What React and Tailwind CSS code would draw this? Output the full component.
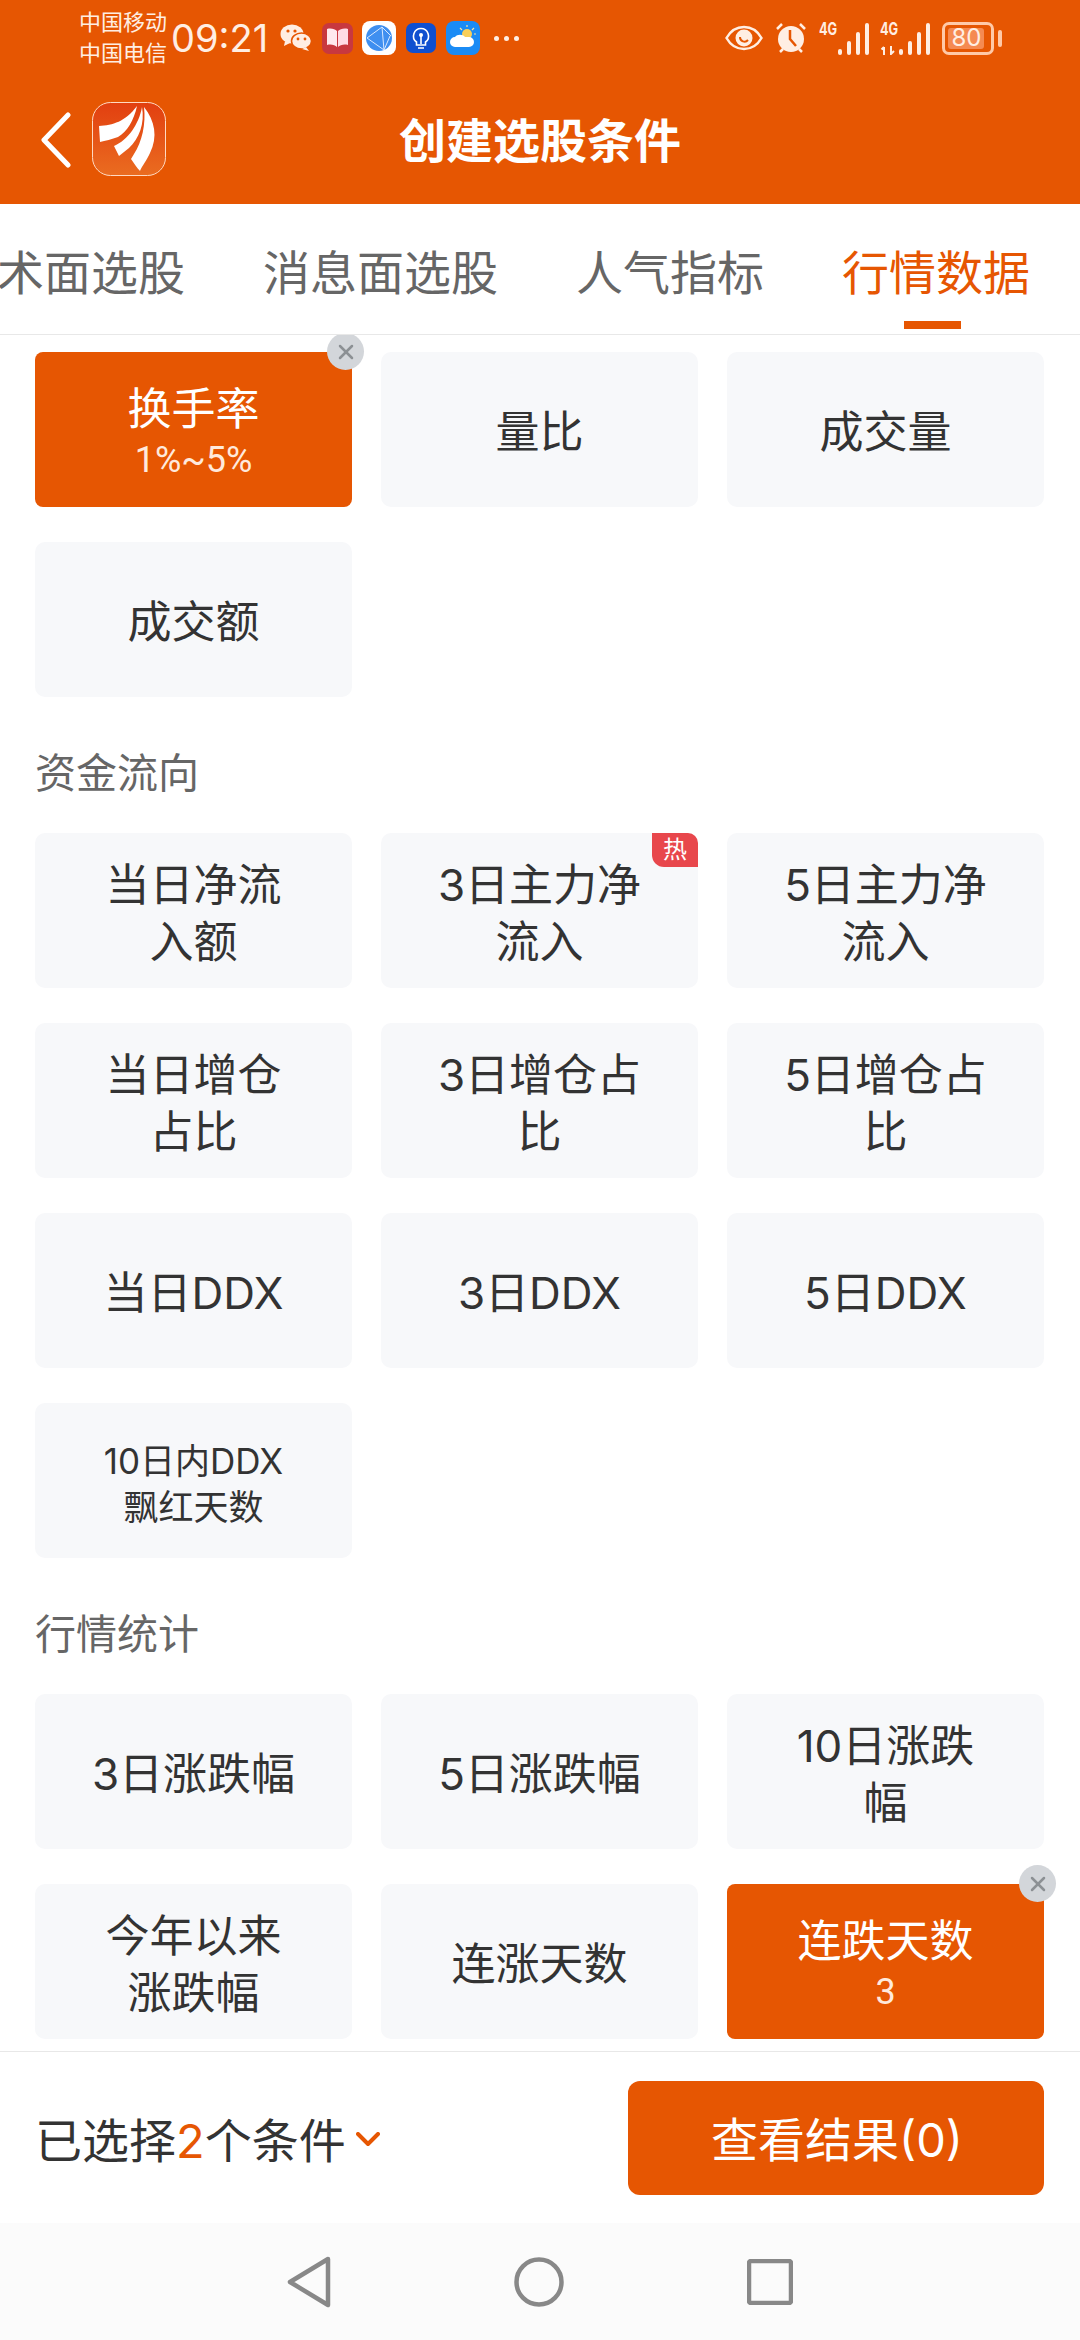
import { X } from "lucide-react";

const ORANGE = "#e65602";

function StatusBar() {
  return (
    <div className="h-[76px] flex items-center pl-[79px] pr-[78px] text-[#ffeee3]">
      <div className="flex flex-col text-[22px] leading-[31px] w-[92px]">
        <span>中国移动</span>
        <span>中国电信</span>
      </div>
      <span className="text-[38px] leading-none w-[100px] font-normal">09:21</span>
      <div className="flex items-center ml-[9px]">
        <svg width="32" height="28" viewBox="0 0 32 28">
          <ellipse cx="12" cy="10" rx="11.5" ry="9.5" fill="#ffeee3" />
          <path d="M5 17l-1 5 6-3z" fill="#ffeee3" />
          <ellipse cx="21.5" cy="17" rx="10" ry="8" fill="#ffeee3" stroke={ORANGE} strokeWidth="1.5" />
          <path d="M26 23l3 4-7-2z" fill="#ffeee3" />
          <circle cx="8" cy="7" r="1.6" fill={ORANGE} />
          <circle cx="15" cy="7" r="1.6" fill={ORANGE} />
          <circle cx="18" cy="15" r="1.4" fill={ORANGE} />
          <circle cx="25" cy="15" r="1.4" fill={ORANGE} />
        </svg>
        <svg className="ml-[10px]" width="31" height="31" viewBox="0 0 31 31">
          <rect width="31" height="31" rx="7" fill="#c8383f" />
          <path d="M5 6c4-1 8 0 10 2v16c-2-2-6-3-10-2z" fill="#ffe9ee" />
          <path d="M26 6c-4-1-8 0-10 2v16c2-2 6-3 10-2z" fill="#ffdbe4" />
        </svg>
        <svg className="ml-[9px]" width="34" height="34" viewBox="0 0 34 34">
          <rect width="34" height="34" rx="8" fill="#fff" />
          <circle cx="17" cy="17" r="13" fill="#3f8ff0" />
          <path d="M5 17l15-11M5 17l17 12M20 6l2 23M20 6l9 9M22 29l6-14" stroke="#d8e9ff" strokeWidth="1" fill="none" />
        </svg>
        <svg className="ml-[10px]" width="30" height="30" viewBox="0 0 30 30">
          <rect width="30" height="30" rx="7" fill="#0f4fd0" />
          <path d="M15 5.500a7.500 7.500 0 0 0-4.500 13.500V22h9v-3a7.500 7.500 0 0 0-4.500-13.500z" fill="none" stroke="#fff" strokeWidth="1.600" />
          <path d="M12 25h6M15 13v8" stroke="#fff" strokeWidth="1.600" />
          <circle cx="15" cy="12" r="2" fill="#fff" />
        </svg>
        <svg className="ml-[10px]" width="34" height="34" viewBox="0 0 34 34">
          <rect width="34" height="34" rx="8" fill="#1a8bf5" />
          <circle cx="21" cy="13" r="5" fill="#f9cf5a" />
          <path d="M21 4v2M28 7l-2 2M30 13h-2M14 7l2 2" stroke="#f9e3a0" strokeWidth="1.200" />
          <path d="M9 26a5 5 0 0 1 0-10c2-3 8-3 10 0h4a5 5 0 0 1 0 10z" fill="#fff" />
        </svg>
        <div className="ml-[14px] flex gap-[5px]">
          <span className="w-[5px] h-[5px] rounded-full bg-[#ffeee3]" />
          <span className="w-[5px] h-[5px] rounded-full bg-[#ffeee3]" />
          <span className="w-[5px] h-[5px] rounded-full bg-[#ffeee3]" />
        </div>
      </div>
      <div className="ml-auto flex items-center">
        <svg width="38" height="26" viewBox="0 0 38 26">
          <path d="M1.500 13C6 5 12 2 19 2s13 3 17.500 11C32 21 26 24 19 24S6 21 1.500 13z" fill="none" stroke="#ffeee3" strokeWidth="2.500" />
          <circle cx="19" cy="13" r="8.500" fill="#ffeee3" />
          <path d="M15 12a4.500 4.500 0 0 0 8 3" fill="none" stroke={ORANGE} strokeWidth="2" />
        </svg>
        <svg className="ml-[12px]" width="32" height="32" viewBox="0 0 32 32">
          <circle cx="16" cy="17" r="13" fill="#ffeee3" />
          <path d="M15 8v9l6 7" fill="none" stroke={ORANGE} strokeWidth="2.500" />
          <path d="M2 7l5-5M30 7l-5-5M5 30l3-3M27 30l-3-3" stroke="#ffeee3" strokeWidth="2.500" />
        </svg>
        <Signal up={false} className="ml-[12px]" />
        <Signal up className="ml-[11px]" />
        <div className="ml-[12px] w-[52px] h-[33px] rounded-[7px] border-[3px] border-[#ffc9a8] p-[3px] relative flex items-center">
          <div className="h-full w-[36px] rounded-[3px] bg-[#f58a52]" />
          <span className="absolute inset-0 flex items-center justify-center text-[24px] leading-none text-[#ffeee3] -ml-[3px]">80</span>
        </div>
        <div className="ml-[4px] w-[4px] h-[17px] rounded-full bg-[#ffc9a8]" />
      </div>
    </div>
  );
}

function Signal({ up, className }) {
  return (
    <div className={`relative w-[50px] h-[33px] ${className}`}>
      <span className="absolute left-0 top-0 text-[17px] leading-[15px] font-bold scale-x-75 origin-left">4G</span>
      {up && (
        <svg className="absolute left-0 bottom-0" width="16" height="9" viewBox="0 0 16 9">
          <path d="M4 9V1M1.500 3.500L4 1M11 0v8l3-3" stroke="#ffeee3" strokeWidth="2" fill="none" />
        </svg>
      )}
      <div className="absolute right-0 bottom-0 flex items-end gap-[5px]">
        <span className="w-[4px] h-[6px] rounded-full bg-[#ffeee3]" />
        <span className="w-[4px] h-[14px] rounded-full bg-[#ffeee3]" />
        <span className="w-[4px] h-[23px] rounded-full bg-[#ffeee3]" />
        <span className="w-[4px] h-[32px] rounded-full bg-[#ffeee3]" />
      </div>
    </div>
  );
}

function Logo() {
  return (
    <svg width="74" height="74" viewBox="0 0 74 74">
      <defs>
        <linearGradient id="logoBg" x1="0" y1="0" x2="0" y2="1">
          <stop offset="0" stopColor="#e23f10" />
          <stop offset="1" stopColor="#ea6c20" />
        </linearGradient>
      </defs>
      <rect x="0.500" y="0.500" width="73" height="73" rx="18" fill="url(#logoBg)" stroke="#ffd9c2" />
      <path d="M7 24c14-1 26-4 38-20-3 14-10 26-19 31-6 2-13 4-18 5z" fill="#fff" />
      <path d="M22 44c14-6 25-22 28-39 3 16-3 32-13 41l-10 8z" fill="#fff" />
      <path d="M42 52c8-12 12-30 10-47 11 14 14 30 6 46-3 7-8 13-10 18-3-3-6-8-9-12z" fill="#fff" />
    </svg>
  );
}

function Header() {
  return (
    <div className="bg-[#e65602] shrink-0 h-[204px] flex flex-col">
      <StatusBar />
      <div className="relative flex-1 flex items-center justify-center">
        <div className="absolute left-[40px] top-0 h-full flex items-center">
          <svg width="32" height="56" viewBox="0 0 32 56">
            <path d="M28 3L4 28l24 25" fill="none" stroke="#fff" strokeWidth="5" strokeLinecap="round" strokeLinejoin="round" />
          </svg>
          <div className="ml-[20px] -mt-[2px] flex">
            <Logo />
          </div>
        </div>
        <span className="text-white text-[47px] font-bold leading-none">创建选股条件</span>
      </div>
    </div>
  );
}

function Tabs() {
  return (
    <div className="shrink-0 h-[131px] border-b border-[#e8e8e8] bg-white overflow-hidden">
      <div className="flex gap-[78px] -ml-[50px] pt-[44px] text-[47px] leading-[50px] text-[#666] whitespace-nowrap">
        <span>技术面选股</span>
        <span>消息面选股</span>
        <span>人气指标</span>
        <span className="relative text-[#e65602]">
          行情数据
          <span className="absolute left-[62px] top-[73px] w-[57px] h-[8px] bg-[#e65602]" />
        </span>
      </div>
    </div>
  );
}

function Card({ lines, value, selected, hot, small }) {
  if (selected) {
    return (
      <div className="relative h-[155px] rounded-[8px] bg-[#e65602] flex flex-col items-center justify-center pt-[5px] text-white">
        <span className="text-[44px] leading-[55px]">{lines[0]}</span>
        <span className="text-[36px] leading-[46px] text-[#ffe9dc] font-['Roboto',sans-serif]">{value}</span>
        <span className="absolute -top-[19px] -right-[12px] w-[37px] h-[37px] rounded-full bg-[#d3d6da] flex items-center justify-center">
          <X size={24} color="#8c9094" strokeWidth={2.500} />
        </span>
      </div>
    );
  }
  return (
    <div className="relative h-[155px] rounded-[10px] bg-[#f7f8fa] flex flex-col items-center justify-center pt-[6px] text-[#333]">
      {lines.map((line) => (
        <span key={line} className={small ? "text-[35px] leading-[46px]" : "text-[44px] leading-[57px]"}>
          {line}
        </span>
      ))}
      {hot && (
        <span className="absolute top-0 right-0 w-[46px] h-[34px] rounded-tr-[10px] rounded-bl-[12px] bg-[#e8474c] text-white text-[24px] leading-[34px] text-center">
          热
        </span>
      )}
    </div>
  );
}

function Grid({ children }) {
  return <div className="grid grid-cols-3 gap-x-[29px] gap-y-[35px]">{children}</div>;
}

function SectionTitle({ children }) {
  return (
    <div className="h-[136px] flex items-center pt-[16px] text-[41px] leading-none text-[#666]">{children}</div>
  );
}

function Footer() {
  return (
    <div className="shrink-0 h-[172px] border-t border-[#e8e8e8] bg-white flex items-center justify-between pl-[35px] pr-[36px]">
      <div className="flex items-center pt-[6px] text-[47px] leading-none text-[#333]">
        <span>已选择</span>
        <span className="text-[#e65602]">2</span>
        <span>个条件</span>
        <svg className="ml-[10px] -mt-[2px]" width="24" height="15" viewBox="0 0 24 15">
          <path d="M2 2l10 10L22 2" fill="none" stroke="#e65602" strokeWidth="4" strokeLinecap="round" strokeLinejoin="round" />
        </svg>
      </div>
      <button className="w-[416px] h-[114px] rounded-[12px] bg-[#e65602] text-white text-[47px] leading-none pt-[4px] pl-[2px]">
        查看结果(0)
      </button>
    </div>
  );
}

function NavBar() {
  return (
    <div className="shrink-0 h-[117px] bg-[#fbfbfb] flex items-center justify-center gap-[183px]">
      <svg width="44" height="52" viewBox="0 0 44 52">
        <path d="M41 3L3 26l38 23z" fill="none" stroke="#888" strokeWidth="4.500" strokeLinejoin="round" />
      </svg>
      <svg width="50" height="50" viewBox="0 0 50 50">
        <circle cx="25" cy="25" r="22.500" fill="none" stroke="#888" strokeWidth="4.500" />
      </svg>
      <svg width="46" height="46" viewBox="0 0 46 46">
        <rect x="2" y="2" width="42" height="42" rx="2" fill="none" stroke="#888" strokeWidth="4.500" />
      </svg>
    </div>
  );
}

export default function App() {
  return (
    <div className="w-[1080px] h-[2340px] bg-white flex flex-col overflow-hidden font-['Inter','Noto_Sans_CJK_SC',sans-serif]">
      <Header />
      <Tabs />
      <div className="flex-1 min-h-0 overflow-hidden pl-[35px] pr-[36px] pt-[17px]">
        <Grid>
          <Card lines={["换手率"]} value="1%~5%" selected />
          <Card lines={["量比"]} />
          <Card lines={["成交量"]} />
          <Card lines={["成交额"]} />
        </Grid>
        <SectionTitle>资金流向</SectionTitle>
        <Grid>
          <Card lines={["当日净流", "入额"]} />
          <Card lines={["3日主力净", "流入"]} hot />
          <Card lines={["5日主力净", "流入"]} />
          <Card lines={["当日增仓", "占比"]} />
          <Card lines={["3日增仓占", "比"]} />
          <Card lines={["5日增仓占", "比"]} />
          <Card lines={["当日DDX"]} />
          <Card lines={["3日DDX"]} />
          <Card lines={["5日DDX"]} />
          <Card lines={["10日内DDX", "飘红天数"]} small />
        </Grid>
        <SectionTitle>行情统计</SectionTitle>
        <Grid>
          <Card lines={["3日涨跌幅"]} />
          <Card lines={["5日涨跌幅"]} />
          <Card lines={["10日涨跌", "幅"]} />
          <Card lines={["今年以来", "涨跌幅"]} />
          <Card lines={["连涨天数"]} />
          <Card lines={["连跌天数"]} value="3" selected />
        </Grid>
      </div>
      <Footer />
      <NavBar />
    </div>
  );
}
